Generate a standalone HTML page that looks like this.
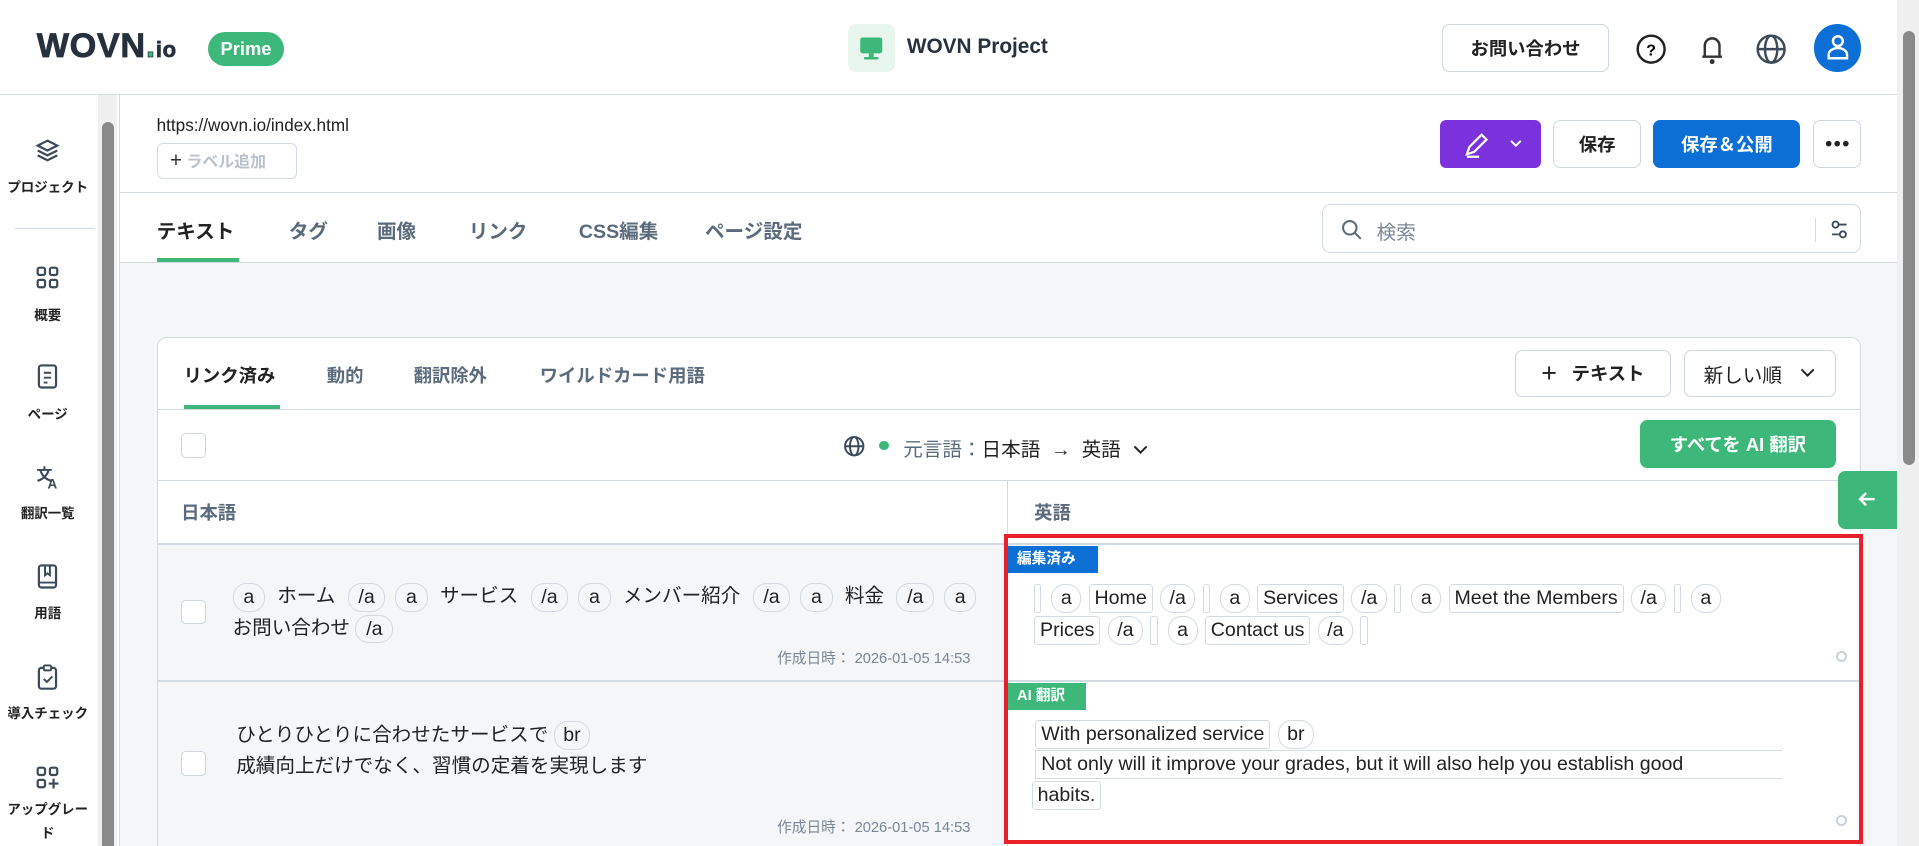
<!DOCTYPE html>
<html><head><meta charset="utf-8">
<style>
*{box-sizing:border-box;margin:0;padding:0}
html,body{width:1919px;height:846px;overflow:hidden;background:#fff}
#z{zoom:1.22386;width:1568px;height:691px;position:relative;font-family:"Liberation Sans","Noto Sans CJK JP",sans-serif;color:#1f2933;overflow:hidden}
.a{position:absolute}
.btn{position:absolute;border:1px solid #cfd6df;border-radius:6px;background:#fff;display:flex;align-items:center;justify-content:center;font-weight:700;font-size:15px;color:#222}
.tab{position:absolute;top:176px;font-size:16px;color:#5b6b7c;font-weight:700}
.chip{display:inline-block;border:1px solid #d3dae2;border-radius:3px;padding:0 4px;line-height:22px;margin-right:6px;vertical-align:middle}
.tg{display:inline-block;border:1px solid #d3dae2;border-radius:11px;padding:0 7px;line-height:22px;margin-right:6px;vertical-align:middle}
.L .tg{padding:0 8px;margin-right:8px}
.em{display:inline-block;border:1px solid #d3dae2;border-radius:2px;width:6px;height:24px;margin-right:8px;vertical-align:middle}
.cb{position:absolute;width:20px;height:20px;border:1px solid #cfd6df;border-radius:4px;background:#fff}
.si{position:absolute;left:0;width:78px;text-align:center;font-size:11px;font-weight:700;color:#222}
.si svg{display:block;margin:0 auto 10px}
</style></head><body><div id="z">
<div class="a" style="left:30px;top:22px;font-size:28px;font-weight:900;color:#27313d;letter-spacing:0.5px;-webkit-text-stroke:0.6px #27313d">WOVN<span style="color:#3db87a">.</span><span style="font-size:18px">io</span></div>
<div class="a" style="left:170px;top:26px;width:62px;height:28px;border-radius:14px;background:#3db87a;color:#fff;font-weight:700;font-size:15px;text-align:center;line-height:28px">Prime</div>
<div class="a" style="left:693px;top:20px;width:38px;height:39px;border-radius:7px;background:#e8f6ee"><svg width="38" height="39"><rect x="10" y="11" width="18" height="13" rx="2" fill="#3db87a"/><rect x="17" y="24" width="4" height="3" fill="#3db87a"/><rect x="13" y="27" width="12" height="2" rx="1" fill="#3db87a"/></svg></div>
<div class="a" style="left:741px;top:29px;font-size:17px;font-weight:700;color:#27313d">WOVN Project</div>
<div class="btn" style="left:1178px;top:20px;width:137px;height:39px">お問い合わせ</div>
<svg class="a" style="left:1335px;top:26px" width="28" height="28"><circle cx="14" cy="14" r="11" fill="none" stroke="#222" stroke-width="2"/><text x="14" y="19" text-anchor="middle" font-size="13" font-weight="700" font-family="Liberation Sans">?</text></svg>
<svg class="a" style="left:1385px;top:25px" width="28" height="30"><path d="M8 21V12a6 6 0 0 1 12 0v9M6 21h16" fill="none" stroke="#333" stroke-width="2"/><circle cx="14" cy="25" r="2" fill="#333"/></svg>
<svg class="a" style="left:1433px;top:26px" width="28" height="28"><circle cx="14" cy="14" r="11" fill="none" stroke="#3c4a59" stroke-width="2"/><ellipse cx="14" cy="14" rx="5" ry="11" fill="none" stroke="#3c4a59" stroke-width="2"/><path d="M3 14h22" stroke="#3c4a59" stroke-width="2"/></svg>
<div class="a" style="left:1482px;top:20px;width:39px;height:39px;border-radius:50%;background:#0b6fd6"><svg width="39" height="39"><circle cx="19.5" cy="14" r="4" fill="none" stroke="#fff" stroke-width="2"/><path d="M12 28v-3a7 5 0 0 1 15 0v3z" fill="none" stroke="#fff" stroke-width="2"/></svg></div>
<div class="a" style="left:0;top:77px;width:1550px;height:1px;background:#d3dae2"></div>
<div class="a" style="left:1550px;top:0;width:18px;height:691px;background:#f0f0f0"></div>
<div class="a" style="left:1555px;top:25px;width:10px;height:355px;border-radius:5px;background:#8a8a8a"></div>
<div class="a" style="left:80px;top:78px;width:16px;height:613px;background:#f0f0f0"></div>
<div class="a" style="left:83px;top:100px;width:10px;height:591px;background:#8a8a8a;border-radius:5px 5px 0 0"></div>
<div class="a" style="left:97px;top:78px;width:1px;height:613px;background:#d3dae2"></div>
<div class="si" style="top:112px"><svg width="22" height="22"><path d="M11 3l8 4-8 4-8-4zM3 11l8 4 8-4M3 15l8 4 8-4" fill="none" stroke="#3c4a59" stroke-width="1.8"/></svg>プロジェクト</div>
<div class="a" style="left:12px;top:186px;width:66px;height:1px;background:#d3dae2"></div>
<div class="si" style="top:216px"><svg width="22" height="22"><rect x="3" y="3" width="6" height="6" rx="1.5" fill="none" stroke="#3c4a59" stroke-width="1.8"/><rect x="13" y="3" width="6" height="6" rx="1.5" fill="none" stroke="#3c4a59" stroke-width="1.8"/><rect x="3" y="13" width="6" height="6" rx="1.5" fill="none" stroke="#3c4a59" stroke-width="1.8"/><rect x="13" y="13" width="6" height="6" rx="1.5" fill="none" stroke="#3c4a59" stroke-width="1.8"/></svg>概要</div>
<div class="si" style="top:297px"><svg width="22" height="22"><rect x="4" y="2" width="14" height="18" rx="2" fill="none" stroke="#3c4a59" stroke-width="1.8"/><path d="M8 8h6M8 12h6M8 16h3" stroke="#3c4a59" stroke-width="1.6"/></svg>ページ</div>
<div class="si" style="top:378px"><svg width="22" height="22"><text x="2" y="14" font-size="13" font-weight="700" fill="#3c4a59" font-family="Noto Sans CJK JP">文</text><text x="11" y="21" font-size="11" font-weight="700" fill="#3c4a59" font-family="Liberation Sans">A</text></svg>翻訳一覧</div>
<div class="si" style="top:460px"><svg width="22" height="22"><rect x="4" y="2" width="14" height="18" rx="2" fill="none" stroke="#3c4a59" stroke-width="1.8"/><path d="M9 2v8l2-1.5 2 1.5V2M4 16h14" fill="none" stroke="#3c4a59" stroke-width="1.6"/></svg>用語</div>
<div class="si" style="top:542px"><svg width="22" height="22"><rect x="4" y="4" width="14" height="17" rx="2" fill="none" stroke="#3c4a59" stroke-width="1.8"/><rect x="8" y="2" width="6" height="4" rx="1" fill="#fff" stroke="#3c4a59" stroke-width="1.6"/><path d="M8 13l2.5 2.5L15 11" fill="none" stroke="#3c4a59" stroke-width="1.6"/></svg>導入チェック</div>
<div class="si" style="top:624px;line-height:20px"><svg width="22" height="22" style="margin-bottom:6px"><rect x="3" y="3" width="6" height="6" rx="1.5" fill="none" stroke="#3c4a59" stroke-width="1.8"/><rect x="13" y="3" width="6" height="6" rx="1.5" fill="none" stroke="#3c4a59" stroke-width="1.8"/><rect x="3" y="13" width="6" height="6" rx="1.5" fill="none" stroke="#3c4a59" stroke-width="1.8"/><path d="M16 12v8M12 16h8" stroke="#3c4a59" stroke-width="1.8"/></svg>アップグレー<br>ド</div>
<div class="a" style="left:128px;top:94px;font-size:14px;color:#222">https://wovn.io/index.html</div>
<div class="a" style="left:128px;top:117px;width:115px;height:29px;border:1px solid #d3dae2;border-radius:5px;font-size:13px;font-weight:700;color:#b9c2cc;line-height:27px;padding-left:10px"><span style="color:#333;font-size:17px;font-weight:400">+</span> ラベル追加</div>
<div class="a" style="left:1177px;top:98px;width:82px;height:39px;border-radius:5px;background:#7b32dd"><svg width="82" height="39"><path d="M22 28l2-6 10-10 4 4-10 10zM22 30h10" fill="none" stroke="#fff" stroke-width="1.8"/><path d="M58 17l4 4 4-4" fill="none" stroke="#fff" stroke-width="1.6"/></svg></div>
<div class="btn" style="left:1269px;top:98px;width:72px;height:39px">保存</div>
<div class="btn" style="left:1351px;top:98px;width:120px;height:39px;background:#0b6fd6;border-color:#0b6fd6;color:#fff">保存＆公開</div>
<div class="btn" style="left:1481px;top:98px;width:40px;height:39px"><svg width="20" height="6"><circle cx="3" cy="3" r="2.3" fill="#222"/><circle cx="10" cy="3" r="2.3" fill="#222"/><circle cx="17" cy="3" r="2.3" fill="#222"/></svg></div>
<div class="a" style="left:98px;top:157px;width:1452px;height:1px;background:#d3dae2"></div>
<div class="tab" style="left:128px;color:#222">テキスト</div>
<div class="a" style="left:128px;top:211px;width:67px;height:3px;background:#3db87a"></div>
<div class="tab" style="left:236px">タグ</div>
<div class="tab" style="left:308px">画像</div>
<div class="tab" style="left:383px">リンク</div>
<div class="tab" style="left:473px">CSS編集</div>
<div class="tab" style="left:576px">ページ設定</div>
<div class="a" style="left:1080px;top:167px;width:441px;height:40px;border:1px solid #d3dae2;border-radius:7px"><svg class="a" style="left:14px;top:10px" width="20" height="20"><circle cx="8" cy="8" r="5.5" fill="none" stroke="#5b6b7c" stroke-width="1.7"/><path d="M12 12l5 5" stroke="#5b6b7c" stroke-width="1.7"/></svg><span class="a" style="left:44px;top:9px;font-size:16px;color:#7b8794">検索</span><div class="a" style="left:402px;top:10px;width:1px;height:20px;background:#d3dae2"></div><svg class="a" style="left:412px;top:9px" width="20" height="22"><circle cx="7" cy="7" r="2.5" fill="none" stroke="#3c4a59" stroke-width="1.5"/><path d="M10 7h6M4 15h6" stroke="#3c4a59" stroke-width="1.5"/><circle cx="13" cy="15" r="2.5" fill="none" stroke="#3c4a59" stroke-width="1.5"/></svg></div>
<div class="a" style="left:98px;top:214px;width:1452px;height:1px;background:#d3dae2"></div>
<div class="a" style="left:98px;top:215px;width:1452px;height:476px;background:#f4f6f8"></div>
<div class="a" style="left:128px;top:275px;width:1393px;height:430px;background:#fff;border:1px solid #d3dae2;border-radius:8px"></div>
<div class="a" style="left:150px;top:296px;font-size:15px;font-weight:700;color:#222">リンク済み</div>
<div class="a" style="left:150px;top:331px;width:79px;height:3px;background:#3db87a"></div>
<div class="a" style="left:267px;top:296px;font-size:15px;font-weight:700;color:#5b6b7c">動的</div>
<div class="a" style="left:338px;top:296px;font-size:15px;font-weight:700;color:#5b6b7c">翻訳除外</div>
<div class="a" style="left:441px;top:296px;font-size:15px;font-weight:700;color:#5b6b7c">ワイルドカード用語</div>
<div class="btn" style="left:1238px;top:286px;width:127px;height:38px"><span style="font-size:22px;font-weight:400;margin-right:12px">+</span>テキスト</div>
<div class="btn" style="left:1376px;top:286px;width:124px;height:38px;font-weight:400;font-size:16px">新しい順<svg width="14" height="10" style="margin-left:14px"><path d="M2 2l5 5 5-5" fill="none" stroke="#222" stroke-width="1.6"/></svg></div>
<div class="a" style="left:129px;top:334px;width:1391px;height:1px;background:#d3dae2"></div>
<div class="cb" style="left:148px;top:354px"></div>
<svg class="a" style="left:688px;top:355px" width="20" height="20"><circle cx="10" cy="10" r="7.5" fill="none" stroke="#3c4a59" stroke-width="1.6"/><ellipse cx="10" cy="10" rx="3.5" ry="7.5" fill="none" stroke="#3c4a59" stroke-width="1.6"/><path d="M2.5 10h15" stroke="#3c4a59" stroke-width="1.6"/></svg>
<div class="a" style="left:718px;top:360px;width:8px;height:8px;border-radius:50%;background:#3db87a"></div>
<div class="a" style="left:738px;top:354px;font-size:16px;color:#222"><span style="color:#5b6b7c">元言語：</span>日本語 &nbsp;→ &nbsp;英語 &nbsp;<svg width="14" height="10"><path d="M2 2l5 5 5-5" fill="none" stroke="#222" stroke-width="1.6"/></svg></div>
<div class="btn" style="left:1340px;top:343px;width:160px;height:39px;background:#3db87a;border-color:#3db87a;color:#fff">すべてを AI 翻訳</div>
<div class="a" style="left:129px;top:392px;width:1391px;height:1px;background:#d3dae2"></div>
<div class="a" style="left:148px;top:408px;font-size:15px;font-weight:700;color:#5b6b7c">日本語</div>
<div class="a" style="left:845px;top:408px;font-size:15px;font-weight:700;color:#5b6b7c">英語</div>
<div class="a" style="left:823px;top:393px;width:1px;height:300px;background:#d3dae2"></div>
<div class="a" style="left:129px;top:444px;width:1391px;height:1px;background:#d3dae2"></div>
<div class="a" style="left:129px;top:445px;width:694px;height:111px;background:#f4f6f8"></div>
<div class="a" style="left:129px;top:556px;width:1391px;height:1px;background:#d3dae2"></div>
<div class="a" style="left:129px;top:557px;width:694px;height:140px;background:#f4f6f8"></div>
<div class="cb" style="left:148px;top:490px"></div>
<div class="a L" style="left:190px;top:475px;width:625px;font-size:16px;line-height:26px;color:#222"><span class="tg">a</span><span style="margin:0 10px 0 2px">ホーム</span><span class="tg">/a</span><span class="tg">a</span><span style="margin:0 10px 0 2px">サービス</span><span class="tg">/a</span><span class="tg">a</span><span style="margin:0 10px 0 2px">メンバー紹介</span><span class="tg">/a</span><span class="tg">a</span><span style="margin:0 10px 0 2px">料金</span><span class="tg">/a</span><span class="tg">a</span><br>お問い合わせ <span class="tg">/a</span></div>
<div class="a" style="left:635px;top:529px;font-size:12px;color:#7b8794">作成日時： 2026-01-05 14:53</div>
<div class="cb" style="left:148px;top:614px"></div>
<div class="a" style="left:193px;top:588px;font-size:16px;line-height:26px;color:#222">ひとりひとりに合わせたサービスで <span class="tg">br</span><br>成績向上だけでなく、習慣の定着を実現します</div>
<div class="a" style="left:635px;top:667px;font-size:12px;color:#7b8794">作成日時： 2026-01-05 14:53</div>
<div class="a" style="left:824px;top:446px;width:73px;height:22px;background:#0b6fd6;color:#fff;font-size:12px;font-weight:700;line-height:22px;padding-left:7px">編集済み</div>
<div class="a" style="left:845px;top:476px;width:620px;font-size:16px;line-height:26px;color:#222"><span class="em"></span><span class="tg">a</span><span class="chip">Home</span><span class="tg">/a</span><span class="em"></span><span class="tg">a</span><span class="chip">Services</span><span class="tg">/a</span><span class="em"></span><span class="tg">a</span><span class="chip">Meet the Members</span><span class="tg">/a</span><span class="em"></span><span class="tg">a</span><br><span class="chip">Prices</span><span class="tg">/a</span><span class="em"></span><span class="tg">a</span><span class="chip">Contact us</span><span class="tg">/a</span><span class="em"></span></div>
<div class="a" style="left:1500px;top:532px;width:9px;height:9px;border-radius:50%;border:2px solid #c9d1da"></div>
<div class="a" style="left:824px;top:558px;width:63px;height:22px;background:#3db87a;color:#fff;font-size:12px;font-weight:700;line-height:22px;padding-left:7px">AI 翻訳</div>
<div class="a" style="left:846px;top:587px;width:620px;font-size:16px;line-height:25px;color:#222"><span class="chip">With personalized service</span><span class="tg">br</span><br><span class="chip" style="width:610px;border-right:none;border-radius:0">Not only will it improve your grades, but it will also help you establish good</span><br><span class="chip" style="margin-left:-3px">habits.</span></div>
<div class="a" style="left:1500px;top:666px;width:9px;height:9px;border-radius:50%;border:2px solid #c9d1da"></div>
<div class="a" style="left:820px;top:436px;width:702px;height:254px;border:4px solid #e8202a"></div>
<div class="a" style="left:1502px;top:385px;width:48px;height:47px;background:#3db87a;border-radius:6px 0 0 6px"><svg width="48" height="47"><path d="M30 23H18M23 18l-5 5 5 5" fill="none" stroke="#fff" stroke-width="2"/></svg></div>
</div></body></html>
